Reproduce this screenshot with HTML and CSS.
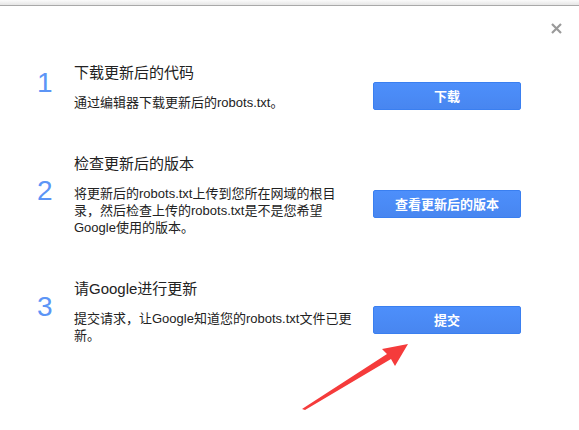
FILE: index.html
```html
<!DOCTYPE html>
<html lang="zh-CN">
<head>
<meta charset="utf-8">
<title>提交robots.txt</title>
<link rel="stylesheet" href="styles.css">
</head>
<body>
<div class="topbar"></div>
<div class="dialog">
  <button class="close" aria-label="关闭">
    <svg width="11" height="11" viewBox="0 0 11 11"><path d="M1 1 L10 10 M10 1 L1 10" stroke="#9a9a9a" stroke-width="2.2" fill="none"/></svg>
  </button>
  <ol class="steps">
    <li class="step">
      <span class="num">1</span>
      <div class="text">
        <h3 class="title">下载更新后的代码</h3>
        <p class="desc">通过编辑器下载更新后的robots.txt。</p>
      </div>
      <button class="action">下载</button>
    </li>
    <li class="step">
      <span class="num">2</span>
      <div class="text">
        <h3 class="title">检查更新后的版本</h3>
        <p class="desc">将更新后的robots.txt上传到您所在网域的根目<br>录，然后检查上传的robots.txt是不是您希望<br>Google使用的版本。</p>
      </div>
      <button class="action">查看更新后的版本</button>
    </li>
    <li class="step">
      <span class="num">3</span>
      <div class="text">
        <h3 class="title">请Google进行更新</h3>
        <p class="desc">提交请求，让Google知道您的robots.txt文件已更<br>新。</p>
      </div>
      <button class="action">提交</button>
    </li>
  </ol>
</div>
<svg class="arrow" width="579" height="430" viewBox="0 0 579 430">
  <polygon points="302,409 387,354 382,349 408,344 395,366 391,359 305,410" fill="#f53b3b"/>
</svg>
</body>
</html>
```

FILE: styles.css
```css
html, body {
  margin: 0;
  padding: 0;
  background: #fff;
}
body {
  width: 579px;
  height: 430px;
  overflow: hidden;
  position: relative;
  font-family: "Liberation Sans", "Noto Sans CJK SC", Arial, sans-serif;
  color: #222;
}
.topbar {
  height: 5px;
  background: linear-gradient(#fbfbfb, #e6e6e6);
  border-bottom: 1px solid #a9a9a9;
}
.dialog {
  position: relative;
}
.close {
  position: absolute;
  top: 17px;
  left: 551px;
  width: 11px;
  height: 11px;
  padding: 0;
  border: 0;
  background: none;
  display: block;
}
.close svg {
  display: block;
}
.steps {
  list-style: none;
  margin: 0;
  padding: 57px 0 0 37px;
  display: flex;
  flex-direction: column;
  gap: 43px;
}
.step {
  display: flex;
  align-items: center;
}
.num {
  width: 37px;
  flex: none;
  font-size: 28px;
  line-height: 28px;
  margin-bottom: 9px;
  color: #5c95f6;
}
.text {
  width: 299px;
  flex: none;
}
.title {
  margin: 0 0 11px;
  font-size: 15px;
  line-height: 20px;
  font-weight: normal;
  color: #222;
}
.desc {
  margin: 0;
  font-size: 13px;
  line-height: 17px;
  white-space: nowrap;
  color: #222;
}
.action {
  width: 148px;
  height: 28px;
  margin: 17px 0 0;
  padding: 0;
  flex: none;
  border: 1px solid #3a7ff0;
  border-radius: 2px;
  background: linear-gradient(#4d8ffb, #4886f0);
  color: #fff;
  font-family: "Noto Sans CJK SC", sans-serif;
  font-size: 13px;
  font-weight: bold;
  line-height: 26px;
}
.arrow {
  position: absolute;
  left: 0;
  top: 0;
  pointer-events: none;
}
```
